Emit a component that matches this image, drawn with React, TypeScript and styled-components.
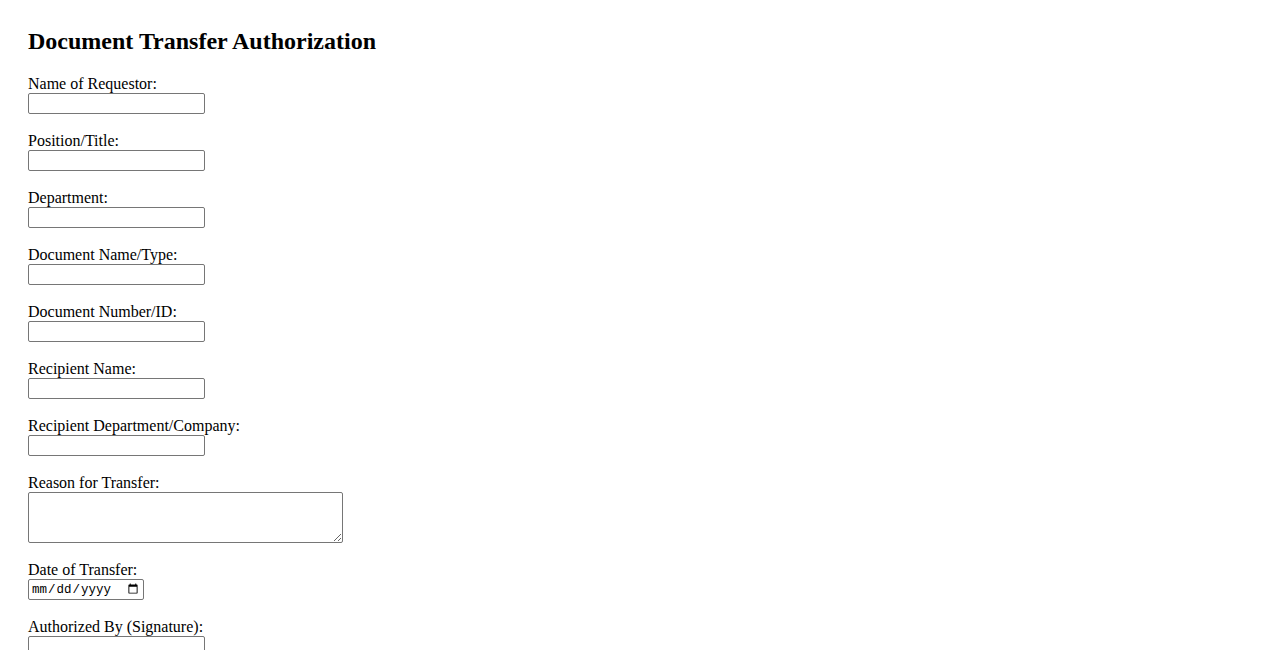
import React from "react";
import styled, { createGlobalStyle } from "styled-components";

const GlobalStyle = createGlobalStyle`
  html, body {
    margin: 0;
    padding: 0;
    background: #ffffff;
  }
  body {
    font-family: "Liberation Serif", "Times New Roman", serif;
    font-size: 16px;
    color: #000000;
  }
`;

const Page = styled.div`
  padding: 28px;
`;

const Title = styled.h2`
  margin: 0 0 21px 0;
  font-size: 24px;
  font-weight: bold;
  line-height: 26px;
`;

const Form = styled.form`
  display: flex;
  flex-direction: column;
  align-items: flex-start;
`;

const Field = styled.div`
  display: flex;
  flex-direction: column;
  align-items: flex-start;
  margin-bottom: 18px;
`;

const Label = styled.label`
  display: block;
  line-height: 18px;
`;

const TextInput = styled.input`
  box-sizing: border-box;
  width: 177px;
  height: 21px;
  margin: 0;
  padding: 1px 2px;
  border: 1px solid #767676;
  border-radius: 2px;
  background: #ffffff;
  font-family: "Liberation Sans", Arial, sans-serif;
  font-size: 13.33px;
`;

const DateInput = styled.input`
  box-sizing: border-box;
  width: 116px;
  height: 21px;
  margin: 0;
  padding: 1px 2px;
  border: 1px solid #767676;
  border-radius: 2px;
  background: #ffffff;
  font-family: "Liberation Mono", "DejaVu Sans Mono", monospace;
  font-size: 12.5px;
  color: #000;
`;

const TextArea = styled.textarea`
  box-sizing: border-box;
  width: 315px;
  height: 51px;
  margin: 0;
  padding: 2px;
  border: 1px solid #767676;
  border-radius: 2px;
  background: #ffffff;
  font-family: "Liberation Mono", monospace;
  font-size: 13.33px;
`;

const textFields: { id: string; label: string }[] = [
  { id: "requestor", label: "Name of Requestor:" },
  { id: "position", label: "Position/Title:" },
  { id: "department", label: "Department:" },
  { id: "docname", label: "Document Name/Type:" },
  { id: "docnumber", label: "Document Number/ID:" },
  { id: "recipient", label: "Recipient Name:" },
  { id: "recipientdept", label: "Recipient Department/Company:" },
];

export default function App() {
  return (
    <>
      <GlobalStyle />
      <Page>
        <Title>Document Transfer Authorization</Title>
        <Form onSubmit={(e) => e.preventDefault()}>
          {textFields.map((f) => (
            <Field key={f.id}>
              <Label htmlFor={f.id}>{f.label}</Label>
              <TextInput id={f.id} type="text" />
            </Field>
          ))}
          <Field>
            <Label htmlFor="reason">Reason for Transfer:</Label>
            <TextArea id="reason" />
          </Field>
          <Field>
            <Label htmlFor="date">Date of Transfer:</Label>
            <DateInput id="date" type="date" />
          </Field>
          <Field>
            <Label htmlFor="signature">Authorized By (Signature):</Label>
            <TextInput id="signature" type="text" />
          </Field>
          <Field>
            <Label htmlFor="authdate">Date of Authorization:</Label>
            <DateInput id="authdate" type="date" />
          </Field>
        </Form>
      </Page>
    </>
  );
}
